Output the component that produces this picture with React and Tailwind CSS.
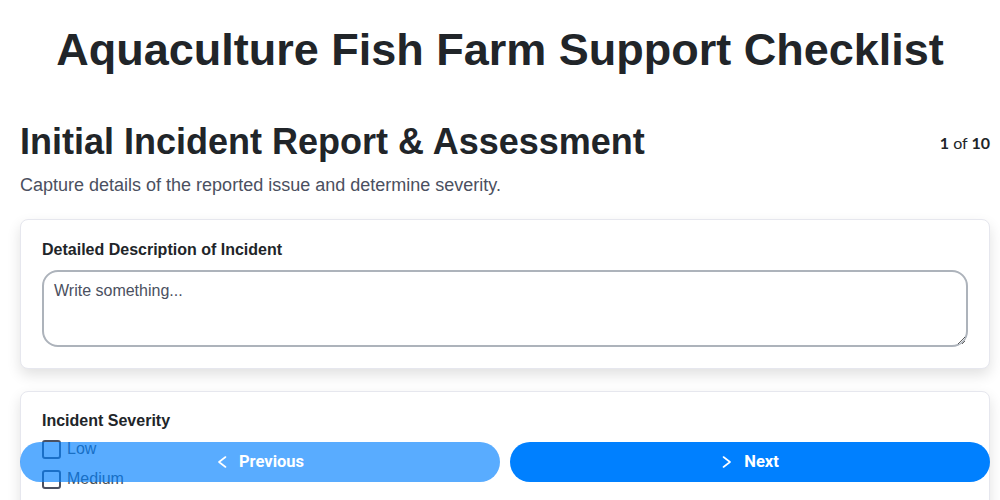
import React from 'react';

const options = ['Low', 'Medium', 'High'];

// thin chevron drawn to match the nav buttons
const Chevron = ({ dir }) => (
  <svg width="12" height="12" viewBox="0 0 12 12" fill="none" stroke="currentColor" strokeWidth="1.6" strokeLinecap="round" strokeLinejoin="round">
    {dir === 'left' ? <polyline points="9.5,1 3,6 9.5,11" /> : <polyline points="2.5,1 9,6 2.5,11" />}
  </svg>
);

const App = () => {
  return (
    <div className="min-h-screen bg-white pb-28 text-[#212529] font-['Liberation_Sans',Arial,sans-serif]">
      <h1 className="pt-[23px] text-center text-[45px] font-bold leading-[1.2]">
        Aquaculture Fish Farm Support Checklist
      </h1>

      <div className="pl-5 pr-[10px]">
        <div className="mt-[43px] flex items-start justify-between">
          <h2 className="text-[36px] font-bold leading-[1.2]">Initial Incident Report &amp; Assessment</h2>
          <div className="pt-[11px] text-base font-['Lato',sans-serif]">
            <span className="font-bold">1</span> of <span className="font-bold">10</span>
          </div>
        </div>
        <p className="mt-[9px] text-[18px] leading-[1.5] text-[#4b5060]">
          Capture details of the reported issue and determine severity.
        </p>

        {/* step cards */}
        <div className="mt-[20px] rounded-lg border border-[#e6e7ee] bg-white px-[21px] pt-[18px] pb-[21px] shadow-[0_6px_14px_rgba(0,0,0,0.12)]">
          <label className="block text-base font-bold leading-6">Detailed Description of Incident</label>
          <textarea
            placeholder="Write something..."
            className="mt-2 block h-[77px] w-full rounded-2xl border-2 border-[#adb3bb] px-[10px] py-[7px] text-base placeholder:text-[#4b5060] outline-none"
          />
        </div>

        <div className="mt-[22px] rounded-lg border border-[#e6e7ee] bg-white px-[21px] pt-[17px] pb-4 shadow-[0_6px_14px_rgba(0,0,0,0.12)]">
          <label className="block text-base font-bold leading-6">Incident Severity</label>
          <div className="mt-[7px] flex flex-col gap-[12px]">
            {options.map((o) => (
              <label key={o} className="flex h-[18px] items-center gap-[6px] text-base text-[#495057]">
                <span className="h-[19px] w-[19px] rounded-[3px] border-2 border-[#4b5060]" />
                {o}
              </label>
            ))}
          </div>
        </div>
      </div>

      {/* nav buttons sit over the page */}
      <div className="fixed bottom-[18px] left-[20px] right-[10px] flex gap-[10px] font-['Roboto',sans-serif]">
        <button className="flex h-10 flex-1 items-center justify-center gap-[11px] rounded-full bg-[#0080ff] text-[16.5px] font-bold text-white opacity-65">
          <Chevron dir="left" />
          Previous
        </button>
        <button className="flex h-10 flex-1 items-center justify-center gap-[11px] rounded-full bg-[#0080ff] text-[16.5px] font-bold text-white">
          <Chevron dir="right" />
          Next
        </button>
      </div>
    </div>
  );
};

export default App;
